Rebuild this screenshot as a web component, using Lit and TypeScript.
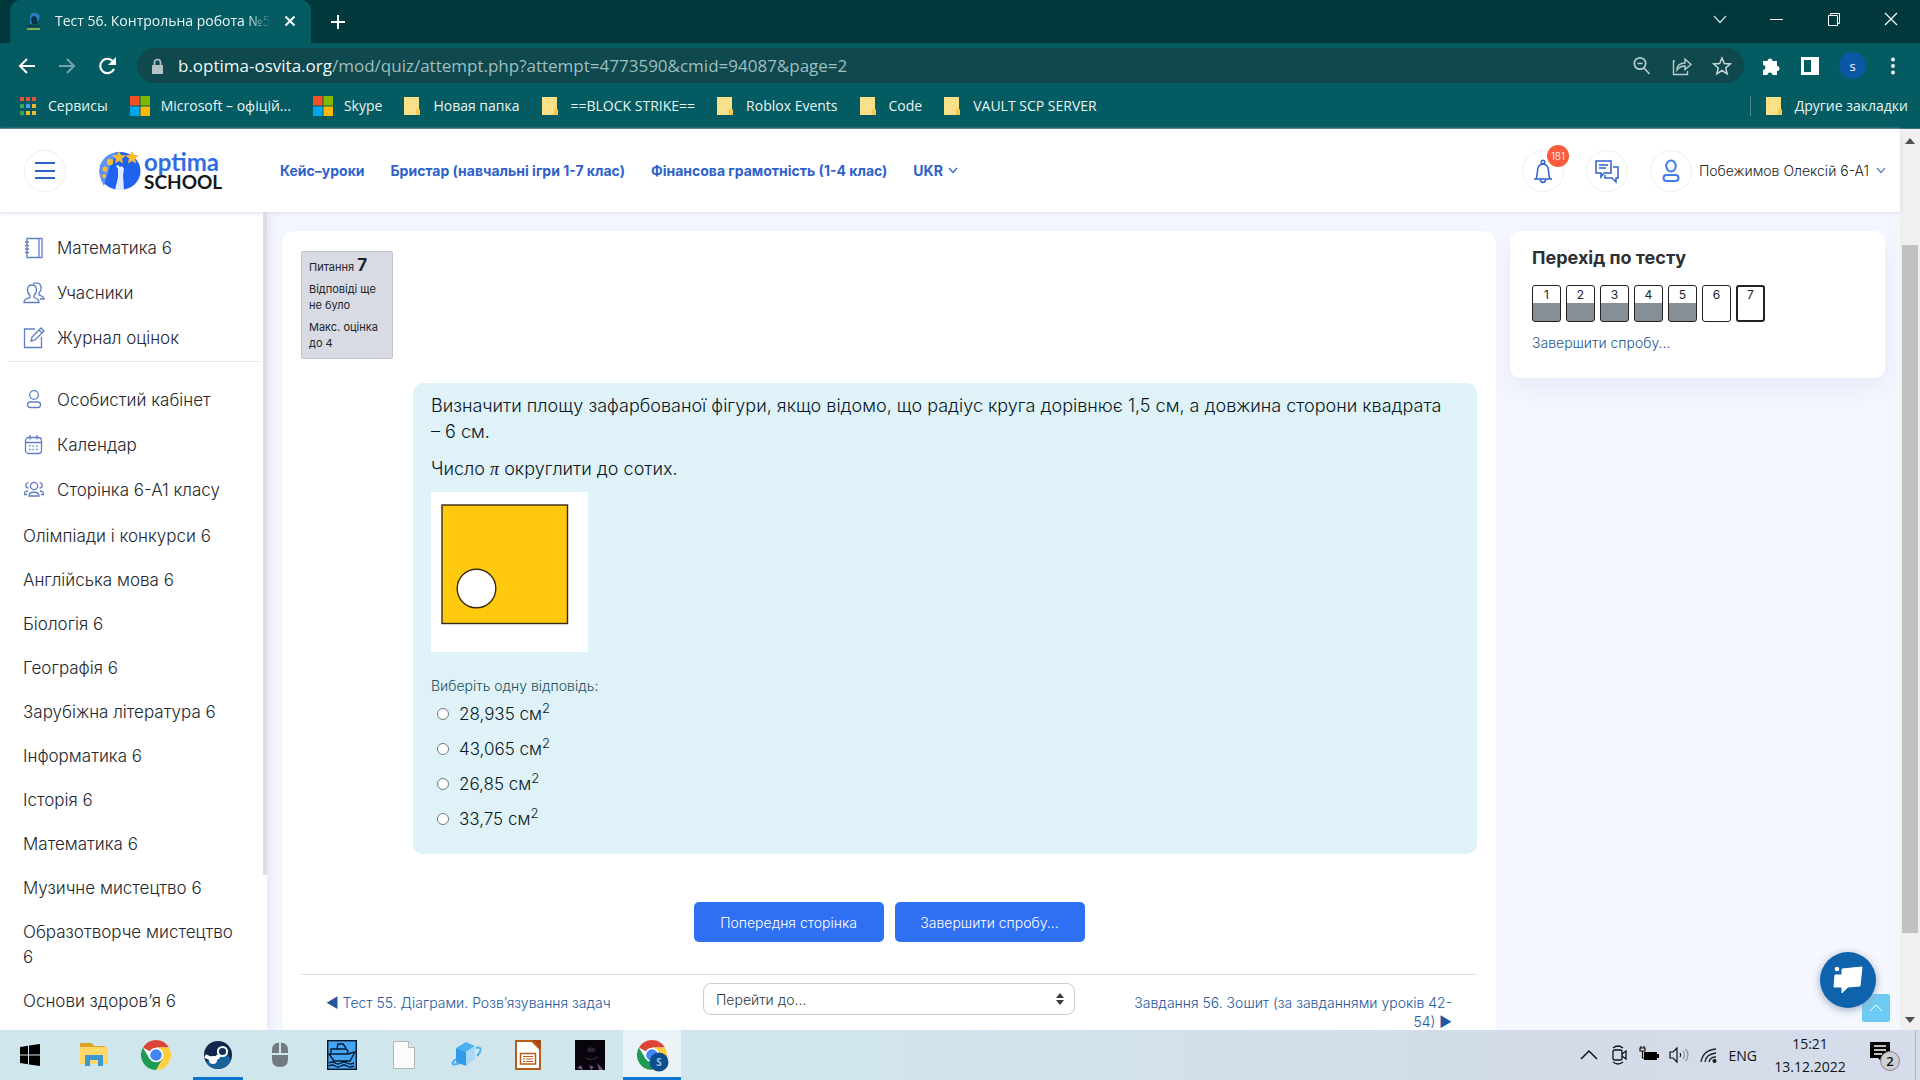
import { LitElement, html, css, svg, nothing } from "lit";
import { customElement, state } from "lit/decorators.js";

const chevron = html`<svg class="chev" viewBox="0 0 10 7"><path d="M1 1l4 4.500 4-4.500" fill="none" stroke="currentColor" stroke-width="1.200"/></svg>`;

const folder = html`<svg class="bm-folder" viewBox="0 0 16 20">
  <path d="M0 1h15v12l1 1v5H0z" fill="#fbe08a"/><path d="M12 19v-5l2-2 2 2v5z" fill="#f6c84c"/></svg>`;

const microsoft = html`<svg class="bm-ms" viewBox="0 0 20 20">
  <path d="M0 0h9.500v9.500H0z" fill="#f25022"/><path d="M10.500 0H20v9.500h-9.500z" fill="#7fba00"/>
  <path d="M0 10.500h9.500V20H0z" fill="#00a4ef"/><path d="M10.500 10.500H20V20h-9.500z" fill="#ffb900"/></svg>`;

const APP_COLORS = ["#e8503a", "#e8503a", "#e8503a", "#3aa757", "#4aa0f5", "#f5b82e", "#3aa757", "#f5b82e", "#f5b82e"];
const apps = html`<svg class="bm-apps" viewBox="0 0 17 18">
  ${APP_COLORS.map((c, i) => svg`<rect x=${(i % 3) * 6} y=${Math.floor(i / 3) * 7} width="4" height="4" fill=${c}/>`)}</svg>`;

const BOOKMARKS = [
  { icon: apps, label: "Сервисы" },
  { icon: microsoft, label: "Microsoft – офіцій..." },
  { icon: microsoft, label: "Skype" },
  { icon: folder, label: "Новая папка" },
  { icon: folder, label: "==BLOCK STRIKE==" },
  { icon: folder, label: "Roblox Events" },
  { icon: folder, label: "Code" },
  { icon: folder, label: "VAULT SCP SERVER" },
];

const line = (body: unknown) => html`<svg class="side-icon" viewBox="0 0 22 22" fill="none" stroke="#5f7fc4" stroke-width="1.300">${body}</svg>`;

const notebook = line(svg`<path d="M4 .5h15v19H4zM16 .5v19M2 4h4M2 7.500h4M2 11h4M2 14.500h4"/>`);
const people = line(svg`<path d="M1 19.500h15c0-3-1-3.500-5-5v-2c4-4 3-10.500-2-10.500s-6 6.500-2 10.500v2c-4 1.500-6 2-6 5z"/><path d="M10 1c5-3 9 .5 8 5 0 2-1 3-2 4v2c3 1 5 1.500 5 4h-4"/>`);
const pencil = line(svg`<path d="M12 1H1.500v18.500h17V9"/><path d="M8 13l1-4 9-9 3 3-9 9zM16 2l3 3"/>`);
const person = line(svg`<circle cx="11" cy="5" r="4.300"/><rect x="4.500" y="12" width="13" height="5.500" rx="2.700"/>`);
const calendar = line(svg`<rect x="2.500" y="2.500" width="16" height="16" rx="3"/><path d="M2.500 7.500h16M7 0v4.500M14 0v4.500"/><path d="M6 11h10M6 14.500h10" stroke-dasharray="1.500 2"/>`);
const group = line(svg`<circle cx="11" cy="6" r="3.600"/><path d="M6 16c0-5 10-5 10 0zM5.500 3C2 2 2 8 5.500 8M16.500 3c3.500-1 3.500 5 0 5M5 11c-3 0-3.500 1-3.500 3.500H4M17 11c3 0 3.500 1 3.500 3.500H18"/>`);

const COURSE_LINKS = [
  { icon: notebook, label: "Математика 6" },
  { icon: people, label: "Учасники" },
  { icon: pencil, label: "Журнал оцінок" },
];
const SITE_LINKS = [
  { icon: person, label: "Особистий кабінет" },
  { icon: calendar, label: "Календар" },
  { icon: group, label: "Сторінка 6-А1 класу" },
];
const SUBJECTS = [
  "Олімпіади і конкурси 6", "Англійська мова 6", "Біологія 6", "Географія 6", "Зарубіжна література 6",
  "Інформатика 6", "Історія 6", "Математика 6", "Музичне мистецтво 6", "Образотворче мистецтво 6", "Основи здоров’я 6",
];
const ANSWERS = ["28,935", "43,065", "26,85", "33,75"];

const chromeLogo = svg`
  <circle cx="15" cy="15" r="15" fill="#fff"/>
  <path d="M15 15L2 7.500A15 15 0 0 1 28 7.500H15z" fill="#db4437"/>
  <path d="M28 7.500A15 15 0 0 1 15 30l6.500-11.300L15 7.500z" fill="#ffcd40"/>
  <path d="M2 7.500A15 15 0 0 0 15 30l6.500-11.300-13 0z" fill="#1e9b52"/>
  <circle cx="15" cy="15" r="7.300" fill="#fff"/><circle cx="15" cy="15" r="5.800" fill="#4285f4"/>`;

const TASKS = [
  { name: "Пуск", art: svg`<path d="M5 7l8-1.200V14.500H5zM14 5.600L25 4v10.500H14zM5 15.500h8v8.700L5 23zM14 15.500h11V26l-11-1.600z" fill="#000"/>` },
  { name: "Проводник", art: svg`<path d="M1 3h12l2 3h11v4H1z" fill="#dba22a"/><path d="M1 7h28v17H1z" fill="#ffd868"/><path d="M6 26V15h18v11h-5v-6h-8v6z" fill="#3c97d3"/>` },
  { name: "Chrome", art: chromeLogo },
  { name: "Steam", running: true, art: svg`<circle cx="15" cy="15" r="14" fill="#12264a"/><path d="M3 22a14 14 0 0 0 25-2L22 10z" fill="#17639c"/><path d="M2 16l9 4 5-4" stroke="#fff" stroke-width="4" fill="none"/><circle cx="10" cy="20" r="4" fill="#fff"/><circle cx="19.500" cy="11.500" r="4.600" fill="#12305a" stroke="#fff" stroke-width="2"/><path d="M9 20l8-5" stroke="#fff" stroke-width="3"/>` },
  { name: "Мышь", art: svg`<path d="M7 13V10q0-7 7-7.500V13zM16 13V2.500q7 .5 7 7.500v3zM7 15h16v4q0 8-8 8t-8-8z" fill="#727c80"/>` },
  { name: "Корабль", art: svg`<rect x=".7" y=".7" width="28.600" height="28.600" fill="#45a5f5" stroke="#04192b" stroke-width="1.400"/><path d="M2 14l5 7h16l5-9-7 2zM4 13V9h15l2 2-1 3H5M10 9l1-5h5l3 4M2 23q3-2 6 0t6 0 6 0 7 0M2 26q3-2 6 0t6 0 6 0 7 0" fill="none" stroke="#04192b" stroke-width="1.400"/>` },
  { name: "Документ", art: svg`<path d="M4.500 1.500h15l6 6v21h-21z" fill="#fbfbfb" stroke="#b3b8ba"/><path d="M19.500 1.500v6h6" fill="#e6e6e6" stroke="#b3b8ba"/>` },
  { name: "Куб", art: svg`<path d="M25 8c7-2 5 4 1 8M5 19c-6 5-4 7 4 4" fill="none" stroke="#4bacee" stroke-width="2"/><path d="M5 8l10-6 9 4-9 6z" fill="#4db0f3"/><path d="M5 8l10 4v14L5 22z" fill="#2f9bea"/><path d="M15 12l9-6v13l-9 7z" fill="#a9d9f7"/>` },
  { name: "Impress", art: svg`<path d="M3 1h16l8 8v20H3z" fill="#fff" stroke="#b85c1c" stroke-width="2"/><path d="M19 0h9v9z" fill="#a34b12"/><rect x="7.500" y="13.500" width="15" height="10.500" fill="#fff" stroke="#b85c1c" stroke-width="1.500"/><path d="M10 16.500h10M10 19h2M13 19h7M10 21.500h2M13 21.500h7" stroke="#b85c1c"/>` },
  { name: "Игра", art: svg`<rect width="30" height="30" fill="#07040b"/><path d="M12 9q5-4 9 1l-2 2h-6zM10 17q7 4 12-1l1 2q-7 4-12 1z" fill="#33213b"/><path d="M2 28l4-3 2 5zM14 25l5 2-3 3zM22 23l4 4 2 3h-4z" fill="#6f5480"/>` },
  { name: "Chrome", running: true, active: true, art: svg`${chromeLogo}<circle cx="22" cy="22" r="9.500" fill="#0b4f8f"/><text x="22" y="26" text-anchor="middle" font-size="10" font-weight="700" fill="#9cc3ea">S</text>` },
];

@customElement("app-root")
export class AppRoot extends LitElement {
  @state() private answer = -1;

  static styles = css`
    :host { display: block; height: 100vh; overflow: hidden; font-family: Inter, "Noto Sans", sans-serif; color: #212529; }
    * { box-sizing: border-box; }
    svg { display: block; flex: none; overflow: visible; }
    button { font: inherit; color: inherit; background: none; border: 0; padding: 0; margin: 0; cursor: pointer; }
    a { color: inherit; text-decoration: none; }
    p, h2, ul { margin: 0; padding: 0; }
    .screen { display: flex; flex-direction: column; height: 100%; }

    .browser { background: #045b61; color: #e8f5f5; font-family: "Open Sans", "Noto Sans", sans-serif; border-bottom: 1px solid #3d6e71; flex: none; }
    .tabs { height: 43px; background: #01383c; display: flex; align-items: stretch; padding-left: 10px; }
    .tab { width: 301px; background: #045b61; border-radius: 10px 10px 0 0; display: flex; align-items: center; padding: 0 15px 2px 16px; gap: 12px; font-size: 14px; }
    .tab-title { flex: 1; white-space: nowrap; overflow: hidden; -webkit-mask-image: linear-gradient(90deg, #000 88%, transparent); mask-image: linear-gradient(90deg, #000 88%, transparent); }
    .favicon { width: 17px; height: 18px; }
    .s12 { width: 12px; height: 12px; }
    .s16 { width: 16px; height: 16px; }
    .s20 { width: 20px; height: 20px; }
    .s24 { width: 24px; height: 24px; }
    .new-tab { width: 54px; display: grid; place-items: center; }
    .window-btns { margin-left: auto; display: flex; padding-bottom: 6px; }
    .window-btns button { width: 57px; display: grid; place-items: center; }
    .toolbar { display: flex; align-items: center; height: 45px; padding: 0 19px 0 17px; }
    .nav-btn { width: 40px; display: grid; place-items: start; }
    .dim { opacity: .45; }
    .omnibox { flex: 1; height: 35px; border-radius: 18px; background: #0f484d; display: flex; align-items: center; padding: 0 8px 0 13px; font-size: 17px; gap: 12px; color: #9fbfc1; }
    .omnibox-text { flex: 1; white-space: nowrap; }
    .host { color: #f0fafa; }
    .omnibox button { width: 28px; display: grid; place-items: center; }
    .tools { display: flex; align-items: center; padding-left: 17px; gap: 19px; }
    .avatar { width: 27px; height: 27px; border-radius: 50%; background: #0b57a4; color: #fff; display: grid; place-items: center; font-size: 13px; }
    .bookmarks { display: flex; align-items: center; height: 40px; padding: 0 12px 5px 20px; gap: 22px; font-size: 14px; }
    .bookmark { display: flex; align-items: center; gap: 11px; white-space: nowrap; }
    .other { margin-left: auto; border-left: 1px solid #4d8a8e; padding-left: 15px; }
    .bm-folder { width: 16px; height: 20px; margin-right: 2px; }
    .bm-ms { width: 20px; height: 20px; }
    .bm-apps { width: 17px; height: 18px; }

    .page { flex: 1; min-height: 0; display: flex; position: relative; }
    .site { flex: 1; min-width: 0; display: flex; flex-direction: column; background: #f5f7fe; }
    .header { height: 83px; flex: none; background: #fff; display: flex; align-items: center; padding: 0 14px 0 24px; box-shadow: 0 1px 4px #d8daea; z-index: 1; }
    .round { width: 42px; height: 42px; border-radius: 50%; border: 1px solid #ebedf8; display: grid; place-items: center; color: #2f6fd6; position: relative; }
    .logo { display: flex; align-items: center; margin: 0 55px 0 32px; width: 127px; gap: 2px; }
    .logo-art { width: 44px; height: 40px; }
    .logo-words { display: flex; flex-direction: column; font-family: Lato, sans-serif; font-weight: 700; padding-top: 3px; }
    .logo-top { font-size: 24px; line-height: 20px; color: #2e6de6; }
    .logo-bottom { font-size: 19px; line-height: 20px; color: #16181c; }
    .menu { display: flex; gap: 26px; font-size: 14px; font-weight: 700; color: #2f62c9; white-space: nowrap; }
    .lang { display: flex; align-items: center; gap: 5px; }
    .chev { width: 10px; height: 7px; }
    .user { margin-left: auto; display: flex; align-items: center; gap: 22px; font-size: 14px; font-weight: 300; }
    .account { display: flex; align-items: center; gap: 7px; }
    .account .chev { color: #5b7bc0; }
    .badge { position: absolute; left: 24px; top: -6px; width: 22px; height: 22px; border-radius: 50%; background: #fa5c3d; color: #fff; font-size: 10px; display: grid; place-items: center; }

    .content { flex: 1; min-height: 0; display: flex; overflow: hidden; }
    .sidebar { width: 267px; flex: none; background: #fff; box-shadow: 0 0 14px #d9dcf2; display: flex; }
    .side-nav { flex: 1; overflow: hidden; padding: 14px 4px 0 8px; font-size: 17px; font-weight: 300; color: #24282e; }
    .side-nav ul { list-style: none; padding: 0 20px 0 15px; }
    .side-nav li { padding: 10px 0; line-height: 25px; }
    .side-nav .subjects { padding-top: 1px; }
    .side-nav .subjects li { padding: 10px 0 9px; }
    .side-nav a { display: flex; gap: 12px; align-items: center; }
    .side-icon { width: 22px; height: 22px; }
    .rule { border: 0; border-top: 1px solid #e2e4e8; margin: 0 0 16px; }
    .side-bar { width: 4px; height: 81%; background: #dcdde2; }

    .main { flex: 1; min-width: 0; display: flex; gap: 14px; padding: 19px 15px 0 15px; align-items: flex-start; }
    .card { background: #fff; border-radius: 10px; box-shadow: 0 0 1px #d4d8ee; }
    .quiz { flex: 1; min-width: 0; padding: 20px 19px; }
    .question { display: flex; align-items: flex-start; gap: 20px; }
    .info { width: 92px; flex: none; border: 1px solid #c3c6cd; background: #d8dbe4; border-radius: 2px; padding: 5px 7px; font-size: 11px; line-height: 16px; display: flex; flex-direction: column; gap: 6px; height: 108px; }
    .info p { white-space: nowrap; }
    .qno { font-size: 17px; font-weight: 700; line-height: 16px; }
    .formulation { flex: 1; min-width: 0; background: #def2f8; border-radius: 10px; margin-top: 132px; padding: 10px 18px 14px; font-size: 18px; font-weight: 300; line-height: 26px; color: #08171f; }
    .formulation p { margin-bottom: 11px; }
    .nowrap { white-space: nowrap; }
    .pi { font-family: "Liberation Serif", serif; font-style: italic; }
    .figure { width: 157px; height: 160px; margin-top: -1px; }
    .legend { padding: 0; }
    .prompt { font-size: 14px; line-height: 18px; color: #1d5160; margin: 25px 0 5px; }
    fieldset { border: 0; margin: 0; padding: 0; min-width: 0; }
    .answer { display: flex; align-items: center; gap: 10px; height: 28px; margin-bottom: 7px; padding-left: 6px; font-size: 17px; }
    .answer input { margin: 0; width: 12px; height: 12px; appearance: none; border: 1px solid #6f7a80; border-radius: 50%; background: #fff; }
    .answer input:checked { border: 4px solid #2f6ff2; }
    sup { font-size: 13px; line-height: 0; vertical-align: 7px; }
    .actions { display: flex; justify-content: center; gap: 11px; margin: 48px 0 32px; }
    .actions button { background: #2f6ff2; color: #fff; border-radius: 5px; height: 40px; width: 190px; font-size: 14px; font-weight: 300; }
    .pager { border-top: 1px solid #dee2e6; display: grid; grid-template-columns: 1fr 372px 1fr; gap: 29px; padding: 8px 25px 0; font-size: 14px; font-weight: 300; line-height: 19px; color: #1f58a0; }
    .pager a { padding-top: 10px; white-space: nowrap; }
    .pager .next { text-align: right; }
    .jump { position: relative; display: flex; align-items: flex-start; }
    .jump select { flex: 1; appearance: none; height: 32px; border: 1px solid #c9cdd4; border-radius: 8px; background: #fff; font: inherit; color: #343a40; padding: 0 12px; }
    .jump svg { position: absolute; right: 11px; top: 10px; width: 8px; height: 12px; }
    .aside { width: 375px; flex: none; padding: 16px 22px 24px; min-height: 147px; box-shadow: 0 10px 24px #e4e9f7; }
    .aside h2 { font-size: 18px; line-height: 22px; font-weight: 700; color: #2c2f33; margin-bottom: 16px; }
    .cells { display: flex; gap: 5px; margin-bottom: 11px; }
    .cell { width: 29px; height: 37px; border: 1px solid #222; border-radius: 3px; font-size: 12px; line-height: 18px; text-align: center; background: #fff; }
    .cell.saved { background: linear-gradient(#fff 50%, #868e96 50%); }
    .cell.current { border-width: 2px; line-height: 16px; }
    .finish { display: block; font-size: 14px; font-weight: 300; line-height: 20px; color: #1f578f; }

    .scrollbar { width: 20px; flex: none; background: #f0f0f0; display: flex; flex-direction: column; align-items: center; padding: 9px 0 7px; }
    .thumb { width: 16px; background: #c1c1c1; flex: 688; margin-top: 101px; }
    .scroll-gap { flex: 84; }
    .arrow { width: 10px; height: 6px; }
    .float { position: absolute; }
    .help { right: 44px; bottom: 22px; width: 56px; height: 56px; border-radius: 50%; background: #0f62ac; display: grid; place-items: center; box-shadow: 0 2px 8px #9aa9bd; }
    .help svg { width: 32px; height: 30px; }
    .to-top { right: 30px; bottom: 8px; width: 28px; height: 28px; background: #6ccbf3; border-radius: 2px; color: #fff; display: grid; place-items: center; }

    .taskbar { height: 50px; flex: none; background: linear-gradient(90deg, #cfe6ed 0%, #d1e5ec 45%, #d3dbe9 80%, #d6dcea 100%); display: flex; color: #101418; font-family: "Open Sans", "Noto Sans", sans-serif; }
    .task { width: 62px; display: grid; place-items: center; border-bottom: 3px solid transparent; border-top: 3px solid transparent; }
    .task:first-child { width: 60px; margin-right: 3px; }
    .task.running { border-bottom-color: #0a76cf; }
    .task.running:not(.active) { width: 50px; margin: 0 6px; }
    .task.active { width: 58px; background: #eaf4f8; border-top-color: #eaf4f8; margin: 0 2px; }
    .task svg { width: 30px; height: 30px; }
    .tray { margin-left: auto; display: flex; align-items: center; gap: 10px; font-size: 14px; padding-right: 15px; border-right: 1px solid #aeb6c4; margin-right: 4px; }
    .clock { width: 86px; text-align: center; line-height: 23px; font-size: 14px; margin-right: 7px; }
    .notes { width: 30px; height: 32px; }
  `;

  private sideItem(item: { icon?: unknown; label: string }) {
    return html`<li><a href="#">${item.icon ?? nothing}<span>${item.label}</span></a></li>`;
  }

  private browser() {
    return html`<div class="browser">
      <div class="tabs">
        <div class="tab">
          <svg class="favicon" viewBox="0 0 17 18"><path d="M4 12V5q1-5 6-4 5 1 3 6l-3 5z" fill="#2b7fc0"/><path d="M5 6q3-4 6 0v6H6z" fill="#0b3350"/><path d="M1 13h13v2H1z" fill="#12424a"/><path d="M1 16h13v2H1z" fill="#7fb23e"/></svg>
          <span class="tab-title">Тест 56. Контрольна робота №5</span>
          <button aria-label="Закрыть вкладку"><svg class="s12" viewBox="0 0 12 12"><path d="M1.500 1.500l9 9M10.500 1.500l-9 9" stroke="#fff" stroke-width="2"/></svg></button>
        </div>
        <button class="new-tab" aria-label="Новая вкладка"><svg class="s16" viewBox="0 0 16 16"><path d="M8 1v14M1 8h14" stroke="#fff" stroke-width="2"/></svg></button>
        <div class="window-btns">
          <button aria-label="Поиск вкладок"><svg class="s16" viewBox="0 0 16 16"><path d="M1 5l6 6.500L13 5" fill="none" stroke="#cfe0e0" stroke-width="1.200"/></svg></button>
          <button aria-label="Свернуть"><svg class="s16" viewBox="0 0 16 16"><path d="M0 8.500h13" stroke="#fff"/></svg></button>
          <button aria-label="Развернуть"><svg class="s16" viewBox="0 0 16 16"><path d="M1.500 4.500h9v10h-9zM3.500 4.500v-2h9v10h-2" fill="none" stroke="#fff"/></svg></button>
          <button aria-label="Закрыть"><svg class="s16" viewBox="0 0 16 16"><path d="M1 2l12 12M13 2L1 14" stroke="#fff" stroke-width="1.200"/></svg></button>
        </div>
      </div>
      <div class="toolbar">
        <button class="nav-btn" aria-label="Назад"><svg class="s20" viewBox="0 0 20 20"><path d="M18 10H3M10 3l-7 7 7 7" fill="none" stroke="#fff" stroke-width="2"/></svg></button>
        <button class="nav-btn dim" aria-label="Вперед"><svg class="s20" viewBox="0 0 20 20"><path d="M2 10h15M10 3l7 7-7 7" fill="none" stroke="#fff" stroke-width="2"/></svg></button>
        <button class="nav-btn" aria-label="Обновить"><svg class="s20" viewBox="0 0 20 20"><path d="M17 13a7.200 7.200 0 1 1-.5-7" fill="none" stroke="#fff" stroke-width="2.200"/><path d="M19 1v8h-8z" fill="#fff"/></svg></button>
        <div class="omnibox">
          <svg class="s16" viewBox="0 0 16 16"><path d="M2 7h11v9H2z" fill="#b6c3c5"/><path d="M4.500 7V4.500a3 3 0 0 1 6 0V7" fill="none" stroke="#b6c3c5" stroke-width="1.700"/></svg>
          <span class="omnibox-text"><span class="host">b.optima-osvita.org</span>/mod/quiz/attempt.php?attempt=4773590&amp;cmid=94087&amp;page=2</span>
          <button aria-label="Масштаб"><svg class="s20" viewBox="0 0 20 20" fill="none" stroke="#b9cccd" stroke-width="1.700"><circle cx="8" cy="7.500" r="5.700"/><path d="M12 12l5.500 6M5.500 7.500h5"/></svg></button>
          <button aria-label="Поделиться"><svg class="s20" viewBox="0 0 20 20" fill="none" stroke="#b9cccd" stroke-width="1.400"><path d="M3 5H1.500v13.500h14V15M5 14c0-5 3-7 8-7V3l6 5.500-6 5V10c-4 0-6 1-8 4z"/></svg></button>
          <button aria-label="В закладки"><svg class="s20" viewBox="0 0 20 20" fill="none" stroke="#c6d6d7" stroke-width="1.500"><path d="M10 2l2.300 5.600 6 .4-4.600 3.900 1.500 5.900L10 14.500l-5.200 3.300 1.500-5.900L1.700 8l6-.4z"/></svg></button>
        </div>
        <div class="tools">
          <button aria-label="Расширения"><svg class="s20" viewBox="0 0 20 20"><path d="M2 5h4.500a2.500 2.500 0 1 1 5 0H16v5a2.500 2.500 0 1 1 0 5v4h-4.500a2.500 2.500 0 0 0-5 0H2v-5a2.500 2.500 0 0 0 0-5z" fill="#fff"/></svg></button>
          <button aria-label="Боковая панель"><svg class="s20" viewBox="0 0 20 20"><path d="M1 1h18v18H1zM4 4v12h7V4z" fill="#fff" fill-rule="evenodd"/></svg></button>
          <button class="avatar">s</button>
          <button aria-label="Меню"><svg class="s16" viewBox="0 0 16 16" fill="#fff"><circle cx="8" cy="1.500" r="1.900"/><circle cx="8" cy="8" r="1.900"/><circle cx="8" cy="14.500" r="1.900"/></svg></button>
        </div>
      </div>
      <div class="bookmarks">
        ${BOOKMARKS.map((b) => html`<a class="bookmark" href="#">${b.icon}<span>${b.label}</span></a>`)}
        <a class="bookmark other" href="#">${folder}<span>Другие закладки</span></a>
      </div>
    </div>`;
  }

  private header() {
    return html`<header class="header">
      <button class="round" aria-label="Меню"><svg class="s20" viewBox="0 0 20 20"><path d="M0 2h20M0 10h20M0 17h20" stroke="#2f62c9" stroke-width="1.800"/></svg></button>
      <a class="logo" href="#">
        <svg class="logo-art" viewBox="0 0 44 40"><ellipse cx="22" cy="20" rx="20.500" ry="19" fill="#1f62f0"/>
          <path d="M2 14Q8 2 20 1l-8 14-6 20Q0 26 2 14z" fill="#5d93f7"/>
          <path d="M17 39l3-13 0-8-2-3 2-1 2 2 2-1 2 3-1 6 1 15z" fill="#dfeaff"/>
          <g fill="#f9bb35"><path d="M21 0l2 4 5 .5-4 3 1 5-4-2.500-4 2.500 1-5-4-3 5-.5zM34 0l2 4 5 .5-4 3 1 5-4-2.500-4 2.500 1-5-4-3 5-.5z"/><circle cx="12" cy="11" r="3.200"/><circle cx="7" cy="18" r="2.600"/><circle cx="6" cy="25" r="2"/></g></svg>
        <span class="logo-words"><span class="logo-top">optima</span><span class="logo-bottom">SCHOOL</span></span>
      </a>
      <nav class="menu">
        <a href="#">Кейс–уроки</a><a href="#">Бристар (навчальні ігри 1-7 клас)</a><a href="#">Фінансова грамотність (1-4 клас)</a>
        <a class="lang" href="#">UKR ${chevron}</a>
      </nav>
      <div class="user">
        <button class="round" aria-label="Сповіщення"><svg class="s24" viewBox="0 0 24 24" fill="none" stroke="#2f62c9" stroke-width="1.500"><path d="M3 20h18M5 20c1-2 1-4 1.500-8Q7 5 12 5t5.500 7c.5 4 .5 6 1.500 8M9 21q3 5 6 0"/><circle cx="12" cy="3" r="1.800"/></svg><span class="badge">181</span></button>
        <button class="round" aria-label="Повідомлення"><svg class="s24" viewBox="0 0 24 24" fill="none" stroke="#2f62c9" stroke-width="1.500"><path d="M1 2h15v12H9l-3 4v-4H1zM4 6h9M4 9h7M18 8h5v11h-2v4l-4-4h-7v-3"/></svg></button>
        <div class="account">
          <button class="round" aria-label="Профіль"><svg class="s24" viewBox="0 0 24 24" fill="none" stroke="#3f7bf5" stroke-width="2"><ellipse cx="12" cy="7" rx="4.800" ry="5.500"/><rect x="4.500" y="16" width="15" height="6" rx="3"/></svg></button>
          <span>Побежимов Олексій 6-А1</span>${chevron}
        </div>
      </div>
    </header>`;
  }

  private quiz() {
    return html`<section class="card quiz">
      <div class="question">
        <div class="info"><p>Питання <span class="qno">7</span></p><p>Відповіді ще<br>не було</p><p>Макс. оцінка<br>до 4</p></div>
        <div class="formulation">
          <p>Визначити площу зафарбованої фігури, якщо відомо, що радіус круга дорівнює 1,5 см, а довжина сторони квадрата <span class="nowrap">– 6 см.</span></p>
          <p>Число <span class="pi">π</span> округлити до сотих.</p>
          <svg class="figure" viewBox="0 0 157 160"><rect width="157" height="160" fill="#fff"/><rect x="11" y="13" width="125.500" height="118.500" fill="#ffc90e" stroke="#3b2a12" stroke-width="1.400"/><circle cx="45.500" cy="96.500" r="19.300" fill="#fff" stroke="#3b2a12" stroke-width="1.400"/></svg>
          <fieldset>
            <legend class="legend"><div class="prompt">Виберіть одну відповідь:</div></legend>
            ${ANSWERS.map((a, i) => html`<label class="answer"><input type="radio" name="answer" .checked=${this.answer === i} @change=${() => (this.answer = i)}><span>${a} см<sup>2</sup></span></label>`)}
          </fieldset>
        </div>
      </div>
      <div class="actions"><button>Попередня сторінка</button><button>Завершити спробу...</button></div>
      <div class="pager">
        <a href="#">◀ Тест 55. Діаграми. Розв’язування задач</a>
        <div class="jump">
          <select id="jump" aria-label="Перейти до..."><option>Перейти до...</option></select>
          <svg viewBox="0 0 8 12"><path d="M0 5l4-5 4 5zM0 7l4 5 4-5z" fill="#343a40"/></svg></div>
        <a class="next" href="#">Завдання 56. Зошит (за завданнями уроків 42-<br>54) ▶</a>
      </div>
    </section>`;
  }

  render() {
    return html`<div class="screen">
      ${this.browser()}
      <div class="page">
        <div class="site">
          ${this.header()}
          <div class="content">
            <aside class="sidebar">
              <nav class="side-nav">
                <ul>${COURSE_LINKS.map((i) => this.sideItem(i))}</ul>
                <hr class="rule">
                <ul>${SITE_LINKS.map((i) => this.sideItem(i))}</ul>
                <ul class="subjects">${SUBJECTS.map((label) => this.sideItem({ label }))}</ul>
              </nav>
              <div class="side-bar"></div>
            </aside>
            <main class="main">
              ${this.quiz()}
              <section class="card aside">
                <h2>Перехід по тесту</h2>
                <div class="cells">${[1, 2, 3, 4, 5, 6, 7].map((n) => html`<a href="#" class="cell ${n < 6 ? "saved" : ""} ${n === 7 ? "current" : ""}">${n}</a>`)}</div>
                <a class="finish" href="#">Завершити спробу...</a>
              </section>
            </main>
          </div>
        </div>
        <div class="scrollbar">
          <svg class="arrow" viewBox="0 0 10 6"><path d="M0 6l5-6 5 6z" fill="#505050"/></svg>
          <div class="thumb"></div><div class="scroll-gap"></div>
          <svg class="arrow" viewBox="0 0 10 6"><path d="M0 0l5 6 5-6z" fill="#505050"/></svg>
        </div>
        <button class="float to-top" aria-label="Вгору"><svg class="s12" viewBox="0 0 12 12"><path d="M0 9l6-6 6 6" fill="none" stroke="#fff"/></svg></button>
        <button class="float help" aria-label="Чат"><svg viewBox="0 0 32 30"><path d="M10 4l20-2-2 19-12 1-6 6v-6H2l1-12h7z" fill="#fff" stroke="#fff" stroke-linejoin="round"/><circle cx="5" cy="4" r="2.300" fill="#fff"/></svg></button>
      </div>
      <footer class="taskbar">
        ${TASKS.map((t) => html`<button class="task ${t.running ? "running" : ""} ${t.active ? "active" : ""}" aria-label=${t.name}><svg viewBox="0 0 30 30">${t.art}</svg></button>`)}
        <div class="tray">
          <svg class="s20" viewBox="0 0 20 20"><path d="M2 14l8-8 8 8" fill="none" stroke="#111" stroke-width="1.500"/></svg>
          <svg class="s20" viewBox="0 0 20 20" fill="none" stroke="#111" stroke-width="1.300"><rect x="4" y="5" width="9" height="10" rx="1.500"/><path d="M13 9l4-3v8l-4-3M4 3q5-4 10 0M4 17q5 4 10 0"/></svg>
          <svg class="s20" viewBox="0 0 20 20"><path d="M5 7h13v8H5zM18 9h2v4h-2z" fill="#000"/><path d="M1 3h5v3H1zM2 1v2M5 1v2M3.500 6v7H5" fill="none" stroke="#111" stroke-width="1.200"/></svg>
          <svg class="s20" viewBox="0 0 20 20" fill="none" stroke="#111" stroke-width="1.200"><path d="M1 7h3l4-4v14l-4-4H1zM11 8q1.500 2 0 4"/><path d="M14 6q3 4 0 8M16.500 4q5 6 0 12" stroke="#8a93a0"/></svg>
          <svg class="s20" viewBox="0 0 20 20" fill="none" stroke="#222" stroke-width="1.300"><path d="M2 17Q4 5 17 4M6 17Q7 9 17 8M10 17q1-5 7-5"/><circle cx="15.500" cy="16" r="1.400" fill="#111"/></svg>
          <span>ENG</span>
          <div class="clock">15:21<br>13.12.2022</div>
          <svg class="notes" viewBox="0 0 30 32"><path d="M0 3h20v16h-7v5l-5-5H0z" fill="#000"/><path d="M4 7h12M4 11h12M4 15h8" stroke="#fff" stroke-width="1.400"/><circle cx="20" cy="22" r="9.500" fill="#cdcfd4" stroke="#82868e"/><text x="20" y="27" text-anchor="middle" font-size="13" font-weight="600" fill="#111">2</text></svg>
        </div>
      </footer>
    </div>`;
  }
}
